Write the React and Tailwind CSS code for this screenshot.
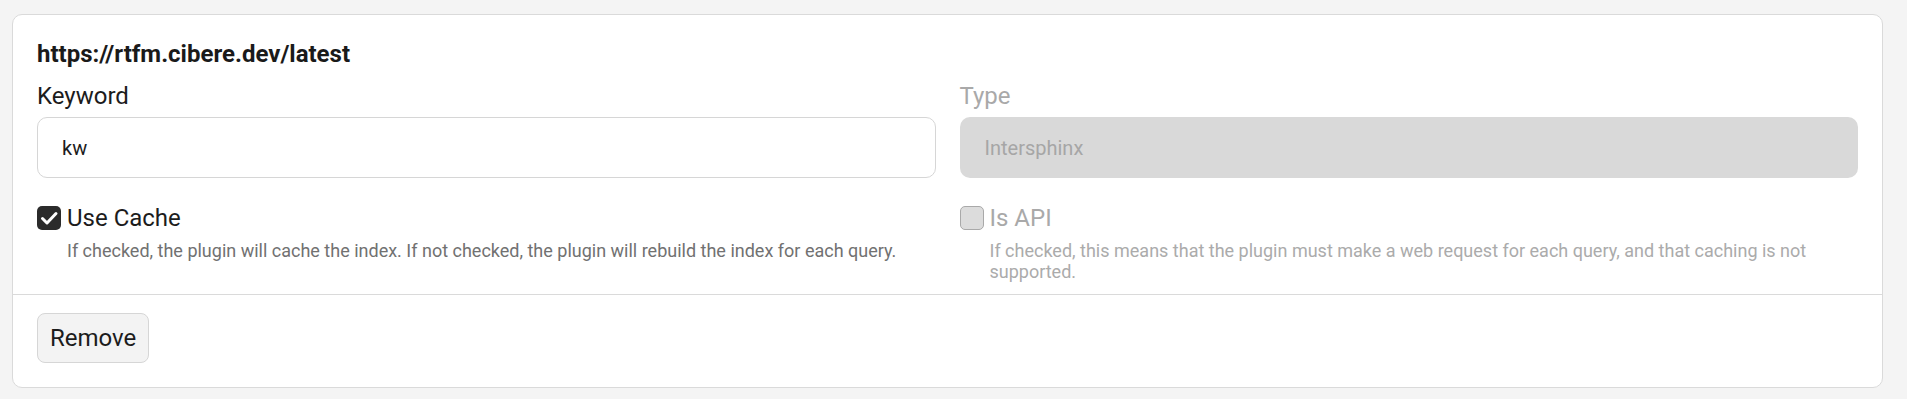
export default function App() {
  return (
    <div className="min-h-screen bg-[#f4f4f4] pl-3 pr-6 pt-[14px] pb-3 font-['Roboto',sans-serif]">
      <div className="rounded-[10px] border border-[#dadada] bg-white">
        <div className="px-6 pt-6 pb-[12px]">
          <h2 className="text-[24px] font-bold leading-[30px] text-[#1a1a1a]">
            https://rtfm.cibere.dev/latest
          </h2>
          <div className="mt-[9px] grid grid-cols-2 gap-x-6">
            <div>
              <label className="block text-[24px] leading-[36px] text-[#1c1c1c]">Keyword</label>
              <input
                defaultValue="kw"
                className="mt-[3px] block h-[61px] w-full rounded-[10px] border border-[#d6d6d6] bg-white px-6 text-[20px] text-[#1c1c1c] outline-none"
              />
              <div className="mt-[28px] flex items-center gap-[6px]">
                <span className="flex h-6 w-6 items-center justify-center rounded-[5px] bg-[#2b2b2b]">
                  <svg viewBox="0 0 24 24" className="h-6 w-6" fill="none" stroke="white" strokeWidth="3" strokeLinecap="round" strokeLinejoin="round">
                    <path d="M5.5 12.5l4.5 4.5L19 7.5" />
                  </svg>
                </span>
                <span className="text-[24px] leading-6 text-[#1c1c1c]">Use Cache</span>
              </div>
              <p className="mt-[10px] pl-[30px] text-[18px] leading-[21px] text-[#717171]">
                If checked, the plugin will cache the index. If not checked, the plugin will rebuild the index for each query.
              </p>
            </div>
            <div>
              <label className="block text-[24px] leading-[36px] text-[#a9a9a9]">Type</label>
              <div className="mt-[3px] flex h-[61px] w-full items-center rounded-[10px] bg-[#d9d9d9] px-[25px] text-[20px] text-[#a6a6a6]">
                Intersphinx
              </div>
              <div className="mt-[28px] flex items-center gap-[6px]">
                <span className="h-6 w-6 rounded-[5px] border border-[#a9a9a9] bg-[#dcdcdc]" />
                <span className="text-[24px] leading-6 text-[#a9a9a9]">Is API</span>
              </div>
              <p className="mt-[10px] pl-[30px] text-[18px] leading-[21px] text-[#ababab]">
                If checked, this means that the plugin must make a web request for each query, and that caching is not supported.
              </p>
            </div>
          </div>
        </div>
        <div className="border-t border-[#dadada] px-6 pt-[18px] pb-6">
          <button className="rounded-[8px] border border-[#d6d6d6] bg-[#f3f3f3] px-3 text-[24px] leading-[48px] text-[#1c1c1c]">
            Remove
          </button>
        </div>
      </div>
    </div>
  );
}
